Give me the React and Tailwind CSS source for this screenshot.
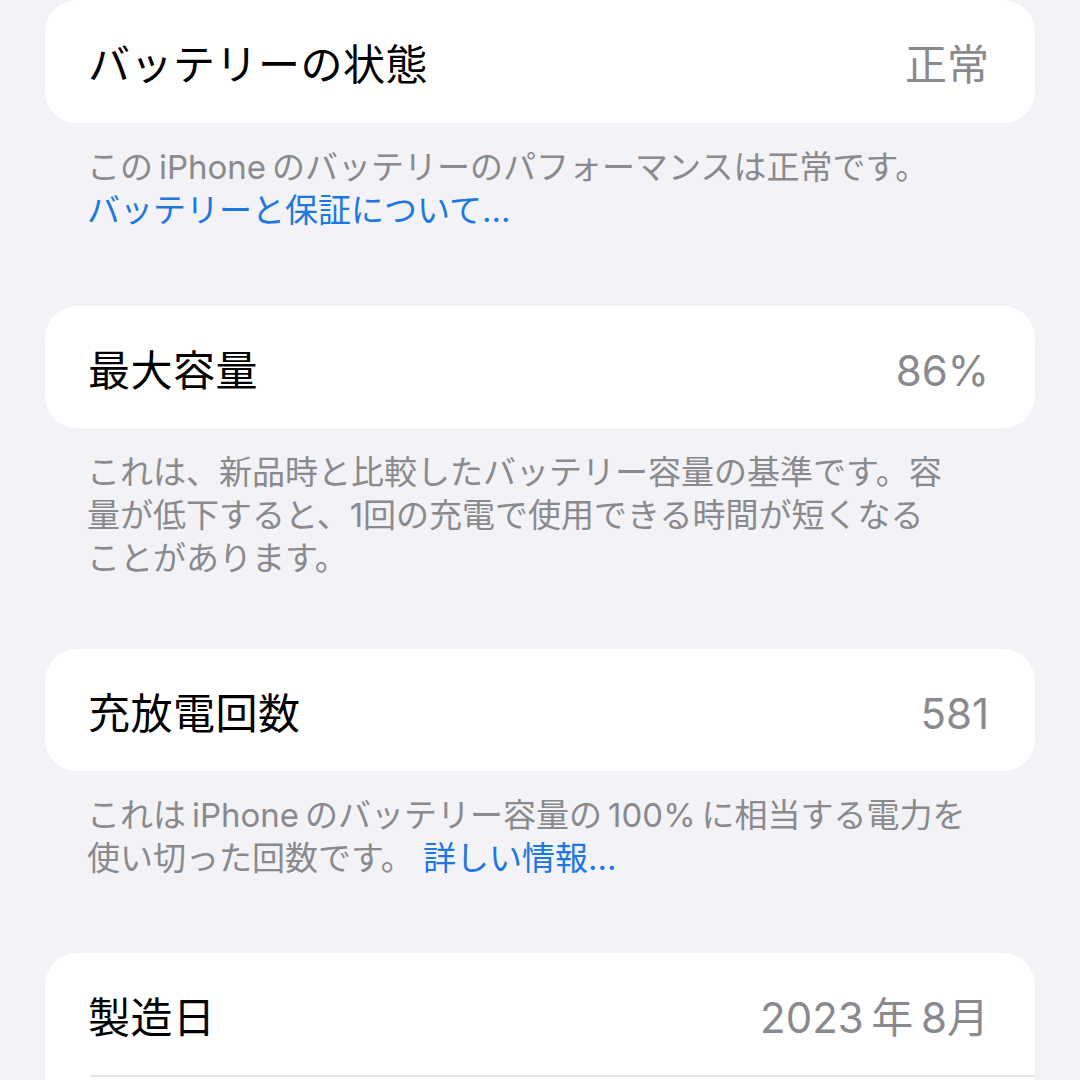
import React from "react";

const Row = ({ label, value, height = "h-[122px]", children }) => (
  <div className="bg-white rounded-[32px] overflow-hidden">
    <div className={`${height} flex items-center justify-between pl-[43px] pr-[46px] pt-[6px]`}>
      <span className="text-[42px] text-black tracking-[0.5px]">{label}</span>
      <span className="text-[42px] text-[#8a8a8e]">{value}</span>
    </div>
    {children}
  </div>
);

const Footer = ({ pb, children }) => (
  <div className={`pl-[42px] pr-[45px] pt-[23px] ${pb} text-[33px] leading-[43px] text-[#8a8a8e] whitespace-nowrap`}>
    {children}
  </div>
);

const Link = ({ children }) => <span className="text-[#1c78e0]">{children}</span>;

export default function App() {
  return (
    <div
      className="w-[1080px] h-[1080px] overflow-hidden bg-[#f2f2f7] px-[45px]"
      style={{ fontFamily: 'Inter, "Noto Sans CJK JP", sans-serif' }}
    >
      <Row label="バッテリーの状態" value="正常" height="h-[123px]" />
      <Footer pb="pb-[74px]">
        <div>この{"\u2009"}iPhone{"\u2009"}のバッテリーのパフォーマンスは正常です。</div>
        <div>
          <Link>バッテリーと保証について...</Link>
        </div>
      </Footer>

      <Row label="最大容量" value="86%" />
      <Footer pb="pb-[69px]">
        <div>これは、新品時と比較したバッテリー容量の基準です。容</div>
        <div>量が低下すると、1回の充電で使用できる時間が短くなる</div>
        <div>ことがあります。</div>
      </Footer>

      <Row label="充放電回数" value="581" />
      <Footer pb="pb-[73px]">
        <div>
          これは{"\u2009"}iPhone{"\u2009"}のバッテリー容量の{"\u2009"}100%{"\u2009"}に相当する電力を
        </div>
        <div>
          使い切った回数です。 <Link>詳しい情報...</Link>
        </div>
      </Footer>

      <Row label="製造日" value={"2023\u2009年\u20098月"}>
        <div className="ml-[45px] h-[2px] bg-[#e3e3e8]" />
        <div className="h-[60px]" />
      </Row>
    </div>
  );
}
